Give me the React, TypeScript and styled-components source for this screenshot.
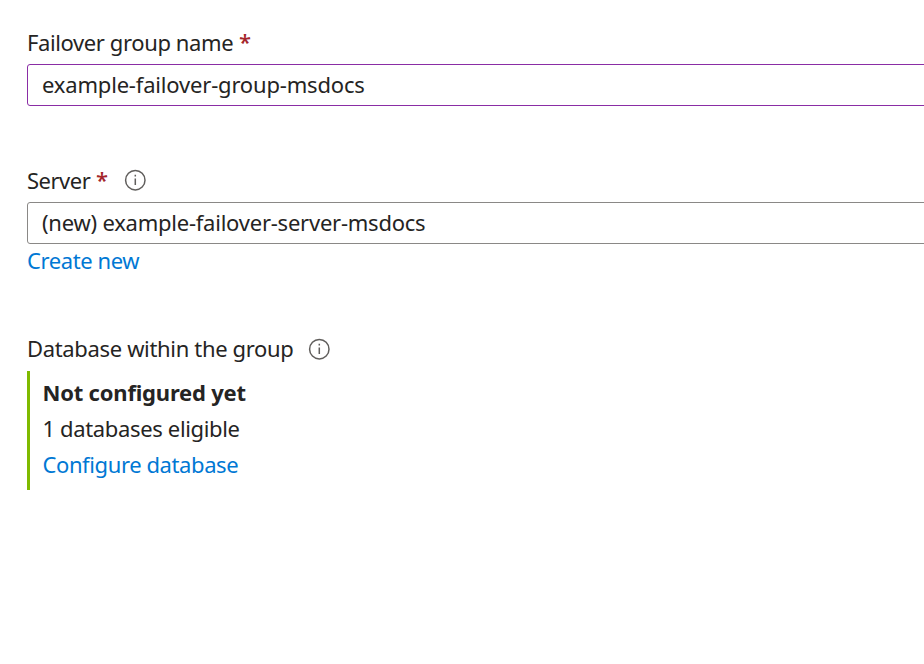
import React from "react";
import styled, { createGlobalStyle } from "styled-components";

const Global = createGlobalStyle`
  body { margin: 0; background: #fff; overflow: hidden; }
  * { box-sizing: border-box; }
`;
const Page = styled.main`
  width: 100%;
  height: 664px;
  padding: 26px 0 0 27px;
  overflow: hidden;
  font: 22px/32px "Noto Sans", "Open Sans", sans-serif;
  color: #252423;
  white-space: nowrap;
`;
const Field = styled.section<{ $gap: number }>`
  display: flex;
  flex-direction: column;
  align-items: flex-start;
  margin-bottom: ${(p) => p.$gap}px;
`;
const Label = styled.label<{ $line?: number }>`
  display: flex;
  align-items: flex-start;
  height: 38px;
  line-height: ${(p) => p.$line ?? 32}px;
`;
const Text = styled.span<{ $width: number; $track: number }>`
  display: block;
  width: ${(p) => p.$width}px;
  letter-spacing: ${(p) => p.$track}px;
`;
const Star = styled.span`
  width: 12px;
  margin-left: 6px;
  color: #a4262c;
  font-family: "Open Sans", sans-serif;
  font-size: 22px;
  font-weight: 600;
  line-height: 30px;
`;
const Info = styled.svg`
  margin: 5px 0 0 16px;
`;
const Box = styled.div<{ $active?: boolean; $track: number }>`
  width: calc(100% + 10px);
  height: 42px;
  padding: 3px 14px;
  border: 1px solid ${(p) => (p.$active ? "#8a2da5" : "#8a8886")};
  border-radius: 3px;
  letter-spacing: ${(p) => p.$track}px;
`;
const Link = styled.a<{ $track: number }>`
  color: #0078d4;
  letter-spacing: ${(p) => p.$track}px;
`;
const Panel = styled.div`
  height: 119px;
  padding: 3px 0 0 12.5px;
  border-left: 3px solid #7fba00;
  line-height: 36px;
  letter-spacing: -0.35px;
`;
const Title = styled.div`
  font-weight: 700;
  letter-spacing: -0.2px;
`;

const InfoIcon = () => (
  <Info width="22" height="22" viewBox="0 0 22 22" fill="none" stroke="#605e5c" strokeWidth="1.5">
    <circle cx="11.3" cy="11.2" r="9.7" />
    <path d="M11.3 9.5v6.6M11.3 5.8v1.6" />
  </Info>
);

export default function App() {
  return (
    <Page>
      <Global />
      <Field $gap={58}>
        <Label><Text $width={206} $track={-0.39}>Failover group name</Text><Star>*</Star></Label>
        <Box $active $track={-0.18}>example-failover-group-msdocs</Box>
      </Field>
      <Field $gap={57}>
        <Label><Text $width={63} $track={-0.5}>Server</Text><Star>*</Star><InfoIcon /></Label>
        <Box $track={-0.23}>(new) example-failover-server-msdocs</Box>
        <Link $track={-0.4}>Create new</Link>
      </Field>
      <Field $gap={0}>
        <Label $line={30}><Text $width={265} $track={-0.34}>Database within the group</Text><InfoIcon /></Label>
        <Panel>
          <Title>Not configured yet</Title>
          <div>1 databases eligible</div>
          <Link $track={-0.4}>Configure database</Link>
        </Panel>
      </Field>
    </Page>
  );
}
